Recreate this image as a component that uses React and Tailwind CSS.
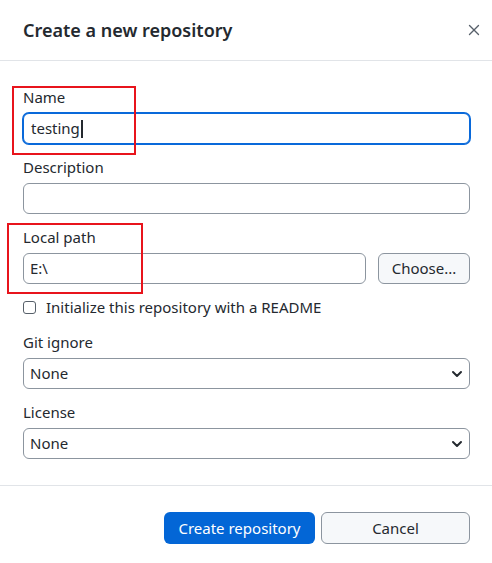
import { X, ChevronDown } from 'lucide-react';

const inputCls =
  'h-[31px] w-full rounded-md border border-[#8c959f] bg-white px-[6px] text-[15px] text-[#24292f] outline-none';

function Field({ label, children, className = '' }) {
  return (
    <div className={className}>
      <div className="h-5 text-[15px] leading-5 text-[#24292f]">{label}</div>
      <div className="mt-[6px]">{children}</div>
    </div>
  );
}

function Select({ value }) {
  return (
    <div className={`${inputCls} flex items-center justify-between`}>
      <span>{value}</span>
      <ChevronDown size={16} strokeWidth={3} className="mr-[-2px] text-[#24292f]" />
    </div>
  );
}

export default function App() {
  return (
    <div
      className="relative h-[563px] w-[492px] bg-white text-[#24292f]"
      style={{ fontFamily: '"Noto Sans", "Open Sans", sans-serif' }}
    >
      {/* header */}
      <div className="flex h-[61px] items-center justify-between border-b border-[#e1e4e8] pl-[23px] pr-[9px]">
        <h1 className="text-[18px] font-semibold text-[#24292f]">Create a new repository</h1>
        <X size={18} strokeWidth={1.8} className="text-[#57606a]" />
      </div>

      {/* form */}
      <div className="pl-[23px] pr-[22px] pt-[26px]">
        <Field label="Name">
          <div className={`${inputCls} flex items-center border-[#0969da] pl-[7px] shadow-[0_0_0_1px_#0969da]`}>
            testing
            <span className="ml-[1px] h-[18px] w-[2px] bg-[#24292f]" />
          </div>
        </Field>

        <Field label="Description" className="mt-[13px]">
          <div className={inputCls} />
        </Field>

        <Field label="Local path" className="mt-[13px]">
          <div className="flex gap-[12px]">
            <div className={`${inputCls} flex flex-1 items-center`}>E:\</div>
            <button className="h-[31px] w-[92px] rounded-md border border-[#8c959f] bg-[#f6f8fa] text-[15px] text-[#24292f]">
              Choose...
            </button>
          </div>
        </Field>

        <label className="mt-[13px] flex h-5 items-center gap-[10px] text-[15px]">
          <span className="h-[13px] w-[13px] rounded-[3px] border border-[#57606a] bg-white" />
          Initialize this repository with a README
        </label>

        <Field label="Git ignore" className="mt-[15px]">
          <Select value="None" />
        </Field>

        <Field label="License" className="mt-[13px]">
          <Select value="None" />
        </Field>
      </div>

      {/* footer */}
      <div className="mt-[26px] flex justify-end gap-[6px] border-t border-[#e1e4e8] pr-[22px] pt-[26px]">
        <button className="h-[32px] w-[151px] rounded-md bg-[#0366d6] text-[15px] text-white">
          Create repository
        </button>
        <button className="h-[32px] w-[149px] rounded-md border border-[#8c959f] bg-[#f6f8fa] text-[15px] text-[#24292f]">
          Cancel
        </button>
      </div>

      {/* red annotation boxes */}
      <div className="pointer-events-none absolute left-[12px] top-[86px] h-[69px] w-[124px] border-2 border-[#e8141c]" />
      <div className="pointer-events-none absolute left-[7px] top-[223px] h-[71px] w-[136px] border-2 border-[#e8141c]" />
    </div>
  );
}
